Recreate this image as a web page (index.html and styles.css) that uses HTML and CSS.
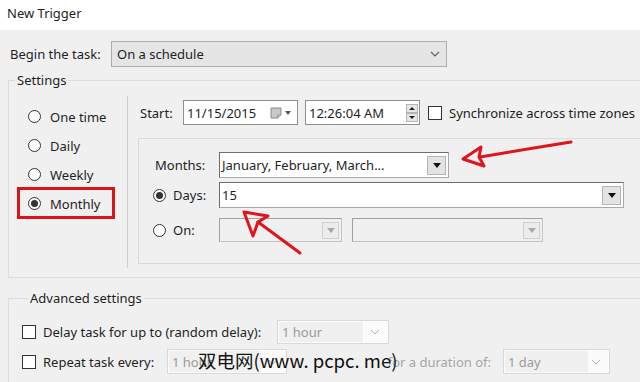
FILE: index.html
```html
<!DOCTYPE html>
<html lang="en">
<head>
    <meta charset="UTF-8">
    <title>New Trigger</title>
    <link rel="stylesheet" href="styles.css">
</head>
<body>
    <div class="titlebar">New Trigger</div>

    <div class="dialog">
        <!-- Begin the task -->
        <div class="begin-row">
            <span class="begin-label">Begin the task:</span>
            <div class="combo-begin">
                <span>On a schedule</span>
                <svg class="chev" width="10" height="6" viewBox="0 0 10 6"><polyline points="1,1 5,5 9,1" fill="none" stroke="#606060" stroke-width="1.2"/></svg>
            </div>
        </div>

        <!-- Settings -->
        <fieldset class="group group-settings">
            <legend>Settings</legend>
            <div class="settings-body">
                <div class="freq">
                    <div class="radio-row"><span class="radio"></span>One time</div>
                    <div class="radio-row"><span class="radio"></span>Daily</div>
                    <div class="radio-row"><span class="radio"></span>Weekly</div>
                    <div class="radio-row marked"><span class="radio checked"></span>Monthly</div>
                </div>

                <div class="schedule">
                    <div class="start-row">
                        <span class="start-label">Start:</span>
                        <div class="field field-date">
                            <span>11/15/2015</span>
                            <svg class="cal" width="22" height="12" viewBox="0 0 22 12">
                                <path d="M1 1 H11 V8 L8 11 H1 Z" fill="#c9c9c9" stroke="#8a8a8a"/>
                                <path d="M8 11 V8 H11" fill="#efefef" stroke="#8a8a8a"/>
                                <polygon points="15,4 21,4 18,8" fill="#3c5a80"/>
                            </svg>
                        </div>
                        <div class="field field-time">
                            <span>12:26:04 AM</span>
                            <div class="spin">
                                <svg width="12" height="18" viewBox="0 0 12 18">
                                    <rect x="0.5" y="0.5" width="11" height="8" fill="#e6e6e6" stroke="#b5b5b5"/>
                                    <rect x="0.5" y="9.5" width="11" height="8" fill="#e6e6e6" stroke="#b5b5b5"/>
                                    <polygon points="3,6 9,6 6,3" fill="#222"/>
                                    <polygon points="3,12 9,12 6,15" fill="#222"/>
                                </svg>
                            </div>
                        </div>
                        <span class="check"></span>
                        <span class="sync-label">Synchronize across time zones</span>
                    </div>

                    <div class="monthly-panel">
                        <div class="panel-row row-months">
                            <span class="row-label months-label">Months:</span>
                            <div class="drop drop-months">
                                <span>January, February, March...</span>
                                <span class="drop-btn"><svg width="8" height="5" viewBox="0 0 8 5"><polygon points="0,0 8,0 4,5" fill="#111"/></svg></span>
                            </div>
                        </div>
                        <div class="panel-row row-days">
                            <span class="row-label"><span class="radio checked"></span>Days:</span>
                            <div class="drop drop-days">
                                <span>15</span>
                                <span class="drop-btn"><svg width="8" height="5" viewBox="0 0 8 5"><polygon points="0,0 8,0 4,5" fill="#111"/></svg></span>
                            </div>
                        </div>
                        <div class="panel-row row-on">
                            <span class="row-label"><span class="radio"></span>On:</span>
                            <div class="drop disabled drop-week">
                                <span class="drop-btn"><svg width="8" height="5" viewBox="0 0 8 5"><polygon points="0,0 8,0 4,5" fill="#a8a8a8"/></svg></span>
                            </div>
                            <div class="drop disabled drop-weekday">
                                <span class="drop-btn"><svg width="8" height="5" viewBox="0 0 8 5"><polygon points="0,0 8,0 4,5" fill="#a8a8a8"/></svg></span>
                            </div>
                        </div>
                    </div>
                </div>
            </div>
        </fieldset>

        <!-- Advanced settings -->
        <fieldset class="group group-advanced">
            <legend>Advanced settings</legend>
            <div class="adv-row row-delay">
                <span class="adv-label delay-label"><span class="check"></span>Delay task for up to (random delay):</span>
                <div class="flat-combo combo-delay">
                    <span class="flat-text">1 hour</span>
                    <svg width="10" height="6" viewBox="0 0 10 6"><polyline points="1,1 5,5 9,1" fill="none" stroke="#b0b0b0" stroke-width="1"/></svg>
                </div>
            </div>
            <div class="adv-row row-repeat">
                <span class="adv-label repeat-label"><span class="check"></span>Repeat task every:</span>
                <div class="flat-combo combo-repeat">
                    <span class="flat-text">1 hour</span>
                    <svg width="10" height="6" viewBox="0 0 10 6"><polyline points="1,1 5,5 9,1" fill="none" stroke="#b0b0b0" stroke-width="1"/></svg>
                </div>
                <span class="duration-label">for a duration of:</span>
                <div class="flat-combo combo-duration">
                    <span class="flat-text">1 day</span>
                    <svg width="10" height="6" viewBox="0 0 10 6"><polyline points="1,1 5,5 9,1" fill="none" stroke="#b0b0b0" stroke-width="1"/></svg>
                </div>
            </div>
        </fieldset>
    </div>

    <div class="watermark">双电网(www. pcpc. me)</div>

    <!-- red annotation arrows -->
    <svg class="annot" width="640" height="382" viewBox="0 0 640 382">
        <g fill="none" stroke="#e0141c" stroke-width="3" stroke-linejoin="round" stroke-linecap="round">
            <path d="M571 142 L540 147 L480 157"/>
            <path d="M481 147 L463 159 L484 166 L479 157 Z"/>
            <path d="M300 253 L258 222"/>
            <path d="M244 212 L268 216 L258 222 L253 236 Z"/>
        </g>
    </svg>
</body>
</html>
```

FILE: styles.css
```css
body {
    margin: 0;
    width: 640px;
    height: 382px;
    overflow: hidden;
    background-color: #f0f0f0;
    font-family: "Noto Sans", sans-serif;
    font-size: 13px;
    color: #1e1e1e;
    position: relative;
}
.titlebar {
    height: 30px;
    line-height: 27px;
    padding-left: 7px;
    background-color: #fff;
}
.dialog {
    padding-left: 8px;
}

/* begin the task */
.begin-row {
    display: flex;
    align-items: center;
    margin-top: 11px;
    height: 26px;
    padding-left: 2px;
}
.begin-label {
    width: 101px;
}
.combo-begin {
    width: 336px;
    height: 26px;
    box-sizing: border-box;
    border: 1px solid #adadad;
    background-color: #e5e5e5;
    display: flex;
    align-items: center;
    justify-content: space-between;
    padding: 0 6px 0 5px;
}

/* group boxes (they run on past the right edge of the window) */
.group {
    margin: 0;
    padding: 0;
    border: 1px solid #dcdcdc;
    border-right: none;
    min-width: 0;
    width: 632px;
    box-sizing: border-box;
}
.group legend {
    padding: 0 2px;
    margin-left: 6px;
    line-height: 18px;
}
.group-settings {
    margin-top: 4px;
}
.settings-body {
    display: flex;
    height: 188px;
}

/* frequency radios */
.freq {
    width: 119px;
    box-sizing: border-box;
    margin-top: 7px;
    height: 172px;
    padding-top: 6px;
    border-right: 1px solid #cfcfcf;
}
.radio-row {
    display: flex;
    align-items: center;
    gap: 9px;
    height: 29px;
    padding-left: 19px;
    position: relative;
}
.radio-row.marked::after {
    content: "";
    position: absolute;
    left: 8px;
    top: -2px;
    width: 98px;
    height: 32px;
    box-sizing: border-box;
    border: 3px solid #d9141b;
}
.radio {
    width: 13px;
    height: 13px;
    box-sizing: border-box;
    border: 1px solid #333;
    border-radius: 50%;
    background-color: #fff;
    display: inline-flex;
    align-items: center;
    justify-content: center;
    flex: none;
}
.radio.checked::before {
    content: "";
    width: 7px;
    height: 7px;
    border-radius: 50%;
    background-color: #333;
}
.check {
    width: 14px;
    height: 14px;
    box-sizing: border-box;
    border: 1px solid #333;
    background-color: #fff;
    flex: none;
}

/* schedule side */
.schedule {
    flex: 1;
    min-width: 0;
    padding: 11px 0 0 10px;
}
.start-row {
    display: flex;
    align-items: center;
    height: 25px;
    padding-left: 2px;
}
.start-label {
    width: 43px;
}
.field {
    height: 25px;
    box-sizing: border-box;
    border: 1px solid #8f8f8f;
    background-color: #fff;
    display: flex;
    align-items: center;
    justify-content: space-between;
    padding-left: 3px;
    flex: none;
}
.field-date {
    width: 115px;
    padding-right: 5px;
}
.field-time {
    width: 115px;
    margin-left: 7px;
    padding-right: 1px;
}
.spin {
    display: flex;
}
.start-row .check {
    margin-left: 8px;
}
.sync-label {
    margin-left: 7px;
    white-space: nowrap;
}

.monthly-panel {
    margin-top: 13px;
    height: 126px;
    box-sizing: border-box;
    border: 1px solid #dadada;
    border-right: none;
    padding: 13px 0 0 14px;
}
.panel-row {
    display: flex;
    align-items: center;
}
.row-label {
    width: 66px;
    display: flex;
    align-items: center;
    gap: 7px;
    flex: none;
}
.months-label {
    padding-left: 2px;
    box-sizing: border-box;
}
.row-months {
    height: 26px;
}
.row-days {
    height: 26px;
    margin-top: 4px;
}
.row-on {
    height: 24px;
    margin-top: 10px;
    gap: 10px;
}
.row-on .row-label {
    margin-right: -10px;
}
.drop {
    height: 100%;
    box-sizing: border-box;
    border: 1px solid #a8a8a8;
    border-top-color: #6e6e6e;
    border-left-color: #6e6e6e;
    background-color: #fff;
    display: flex;
    align-items: center;
    justify-content: space-between;
    padding: 0 2px 0 2px;
    flex: none;
}
.drop-btn {
    width: 19px;
    height: 19px;
    box-sizing: border-box;
    border: 1px solid #b4b4b4;
    background-color: #e3e3e3;
    display: flex;
    align-items: center;
    justify-content: center;
    margin-left: auto;
}
.drop-months {
    width: 230px;
}
.drop-days {
    width: 405px;
}
.drop.disabled {
    background-color: #f0f0f0;
    border-color: #c4c4c4;
    border-top-color: #a0a0a0;
    border-left-color: #a0a0a0;
}
.drop.disabled .drop-btn {
    width: 17px;
    height: 17px;
    background-color: #ececec;
    border-color: #d0d0d0;
}
.drop-week {
    width: 123px;
}
.drop-weekday {
    width: 191px;
}

/* advanced settings (cut off by the bottom of the window) */
.group-advanced {
    margin-top: 11px;
    height: 93px;
    border-bottom: none;
    padding: 13px 0 0 13px;
}
.adv-row {
    display: flex;
    align-items: center;
}
.adv-label {
    display: flex;
    align-items: center;
    gap: 7px;
    flex: none;
}
.delay-label {
    width: 255px;
}
.repeat-label {
    width: 145px;
}
.row-delay {
    height: 24px;
}
.row-repeat {
    height: 25px;
    margin-top: 5px;
}
.flat-combo {
    height: 100%;
    box-sizing: border-box;
    border: 1px solid #d9d9d9;
    background-color: #fbfbfb;
    display: flex;
    align-items: center;
    justify-content: space-between;
    padding: 1px 8px 1px 1px;
    color: #9a9a9a;
    flex: none;
}
.flat-text {
    align-self: stretch;
    display: flex;
    align-items: center;
    padding-left: 3px;
    background-color: #f0f0f0;
    overflow: hidden;
    white-space: nowrap;
}
.combo-delay {
    width: 112px;
}
.combo-delay .flat-text {
    width: 81px;
}
.combo-repeat {
    width: 120px;
}
.combo-repeat .flat-text {
    width: 89px;
}
.combo-duration {
    width: 107px;
}
.combo-duration .flat-text {
    width: 80px;
}
.duration-label {
    width: 216px;
    box-sizing: border-box;
    text-align: right;
    padding-right: 12px;
    color: #a5a5a5;
    flex: none;
}

/* overlays */
.watermark {
    position: absolute;
    left: 198px;
    top: 347px;
    font-family: "Noto Sans CJK SC", sans-serif;
    font-size: 18.5px;
    line-height: 26px;
    color: #111;
    white-space: nowrap;
}
.annot {
    position: absolute;
    left: 0;
    top: 0;
    pointer-events: none;
}
```
